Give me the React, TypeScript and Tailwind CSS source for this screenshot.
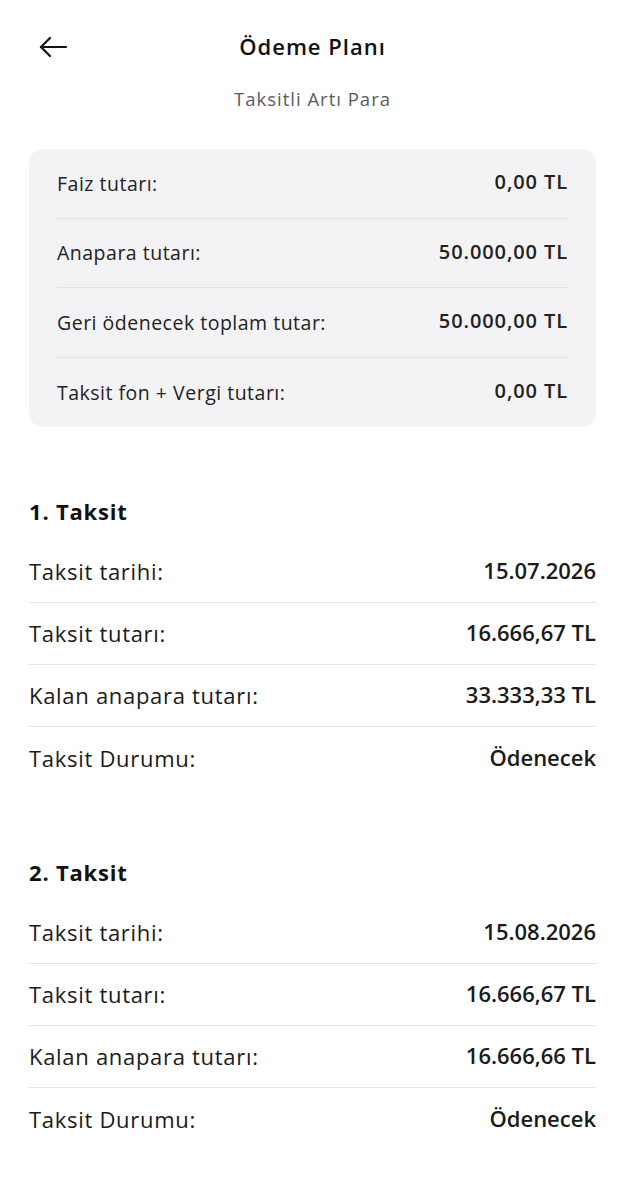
import React from 'react';

interface Row {
    label: string;
    value: string;
}

const summary: Row[] = [
    { label: 'Faiz tutarı:', value: '0,00 TL' },
    { label: 'Anapara tutarı:', value: '50.000,00 TL' },
    { label: 'Geri ödenecek toplam tutar:', value: '50.000,00 TL' },
    { label: 'Taksit fon + Vergi tutarı:', value: '0,00 TL' },
];

const installments: { title: string; rows: Row[] }[] = [
    {
        title: '1. Taksit',
        rows: [
            { label: 'Taksit tarihi:', value: '15.07.2026' },
            { label: 'Taksit tutarı:', value: '16.666,67 TL' },
            { label: 'Kalan anapara tutarı:', value: '33.333,33 TL' },
            { label: 'Taksit Durumu:', value: 'Ödenecek' },
        ],
    },
    {
        title: '2. Taksit',
        rows: [
            { label: 'Taksit tarihi:', value: '15.08.2026' },
            { label: 'Taksit tutarı:', value: '16.666,67 TL' },
            { label: 'Kalan anapara tutarı:', value: '16.666,66 TL' },
            { label: 'Taksit Durumu:', value: 'Ödenecek' },
        ],
    },
];

const BackArrow = () => (
    <svg width="30" height="24" viewBox="0 0 30 24" fill="none" stroke="#111" strokeWidth="2.2" strokeLinecap="round" strokeLinejoin="round">
        <path d="M2 12H27" />
        <path d="M2 12L11 3" />
        <path d="M2 12L11 21" />
    </svg>
);

const App: React.FC = () => {
    return (
        <div className="min-h-[1200px] w-[625px] bg-white text-[#1c1c1c]" style={{ fontFamily: '"Open Sans", "Noto Sans", sans-serif' }}>
            {/* header */}
            <div className="relative flex h-[94px] items-center justify-center">
                <button className="absolute left-[39px] top-[35px]">
                    <BackArrow />
                </button>
                <h1 className="-mt-[2px] text-[22px] font-semibold leading-none tracking-[1px] text-[#111]">Ödeme Planı</h1>
            </div>
            <p className="-mt-[5px] text-center text-[18.5px] leading-[20px] tracking-[1px] text-[#5a5a5e]">Taksitli Artı Para</p>

            {/* summary card */}
            <div className="mx-[29px] mt-[40px] rounded-[14px] bg-[#f3f3f5] px-[28px]">
                {summary.map((r, i) => (
                    <div
                        key={r.label}
                        className={`flex h-[69.5px] items-center justify-between ${i < summary.length - 1 ? 'border-b border-[#e3e3e6]' : ''}`}
                    >
                        <span className="text-[19.5px] tracking-[0.5px] text-[#222]">{r.label}</span>
                        <span className="-mt-[2px] text-[20px] font-semibold tracking-[0.9px] text-[#222]">{r.value}</span>
                    </div>
                ))}
            </div>

            {/* installments */}
            <div className="px-[29px] pt-[54px]">
                {installments.map((ins, idx) => (
                    <div key={ins.title} className={idx > 0 ? 'mt-[53px]' : ''}>
                        <h2 className="flex h-[60px] items-center text-[22px] font-bold leading-none tracking-[0.8px] text-[#111]">{ins.title}</h2>
                        <div>
                            {ins.rows.map((r, i) => (
                                <div
                                    key={r.label}
                                    className={`flex h-[62px] items-center justify-between ${i < ins.rows.length - 1 ? 'border-b border-[#e4e4e6]' : ''}`}
                                >
                                    <span className="text-[22px] tracking-[0.7px] text-[#1a1a1a]">{r.label}</span>
                                    <span className="-mt-[2px] text-[22px] font-semibold text-[#1a1a1a]">{r.value}</span>
                                </div>
                            ))}
                        </div>
                    </div>
                ))}
            </div>
        </div>
    );
};

export default App;
